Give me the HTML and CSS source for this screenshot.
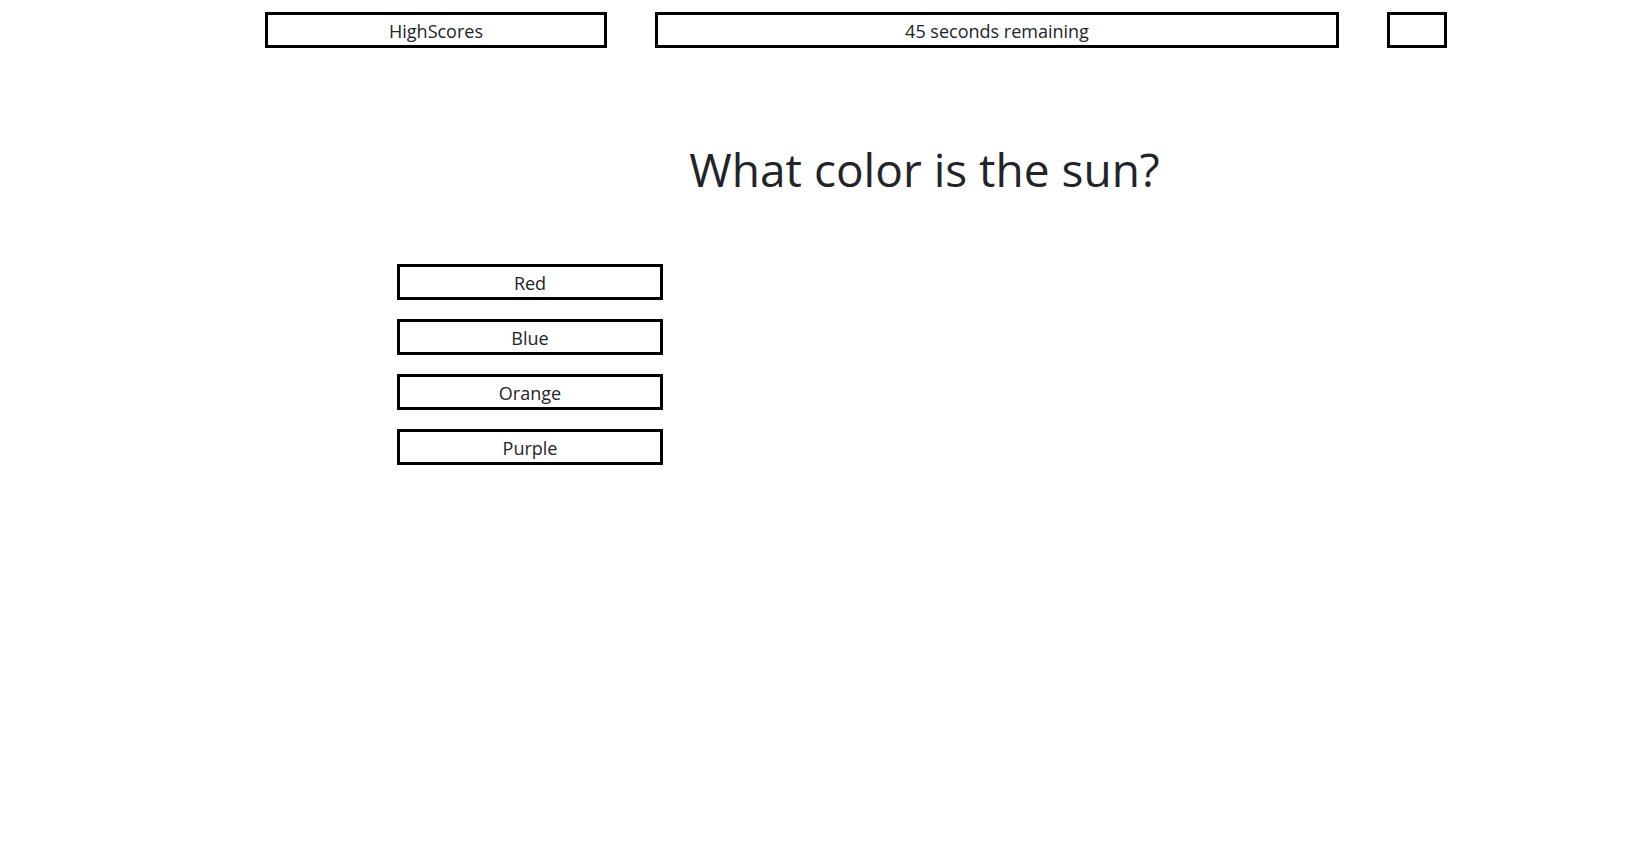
FILE: index.html
```html
<!DOCTYPE html>
<html lang="en">
<head>
<meta charset="utf-8">
<title>Quiz</title>
<link rel="stylesheet" href="styles.css">
</head>
<body>
<header class="topbar">
  <button class="box box-scores">HighScores</button>
  <div class="box box-timer">45 seconds remaining</div>
  <div class="box box-small"></div>
</header>
<main class="quiz">
  <h1 class="question">What color is the sun?</h1>
  <div class="answers">
    <button class="box answer">Red</button>
    <button class="box answer">Blue</button>
    <button class="box answer">Orange</button>
    <button class="box answer">Purple</button>
  </div>
</main>
</body>
</html>
```

FILE: styles.css
```css
html, body {
  margin: 0;
  padding: 0;
  background: #fff;
}
body {
  font-family: "Open Sans", "Noto Sans", sans-serif;
  color: #212529;
}
.topbar {
  display: flex;
  gap: 48px;
  padding: 12px 0 0 265px;
}
.box {
  box-sizing: border-box;
  height: 36px;
  border: 3px solid #000;
  background: #fff;
  font-family: inherit;
  font-size: 18px;
  color: #212529;
  display: flex;
  align-items: center;
  justify-content: center;
  padding: 2px 0 0 0;
  margin: 0;
  line-height: 1;
}
.box-scores { width: 342px; }
.box-timer { width: 684px; }
.box-small { width: 60px; }
.quiz {
  display: flex;
  flex-direction: column;
}
.question {
  margin: 91px 0 0 265px;
  width: 1319px;
  text-align: center;
  font-weight: 400;
  font-size: 46px;
  line-height: 60px;
  color: #212529;
}
.answers {
  display: flex;
  flex-direction: column;
  gap: 19px;
  margin: 65px 0 0 397px;
  width: 266px;
}
.answer {
  width: 266px;
}
```
